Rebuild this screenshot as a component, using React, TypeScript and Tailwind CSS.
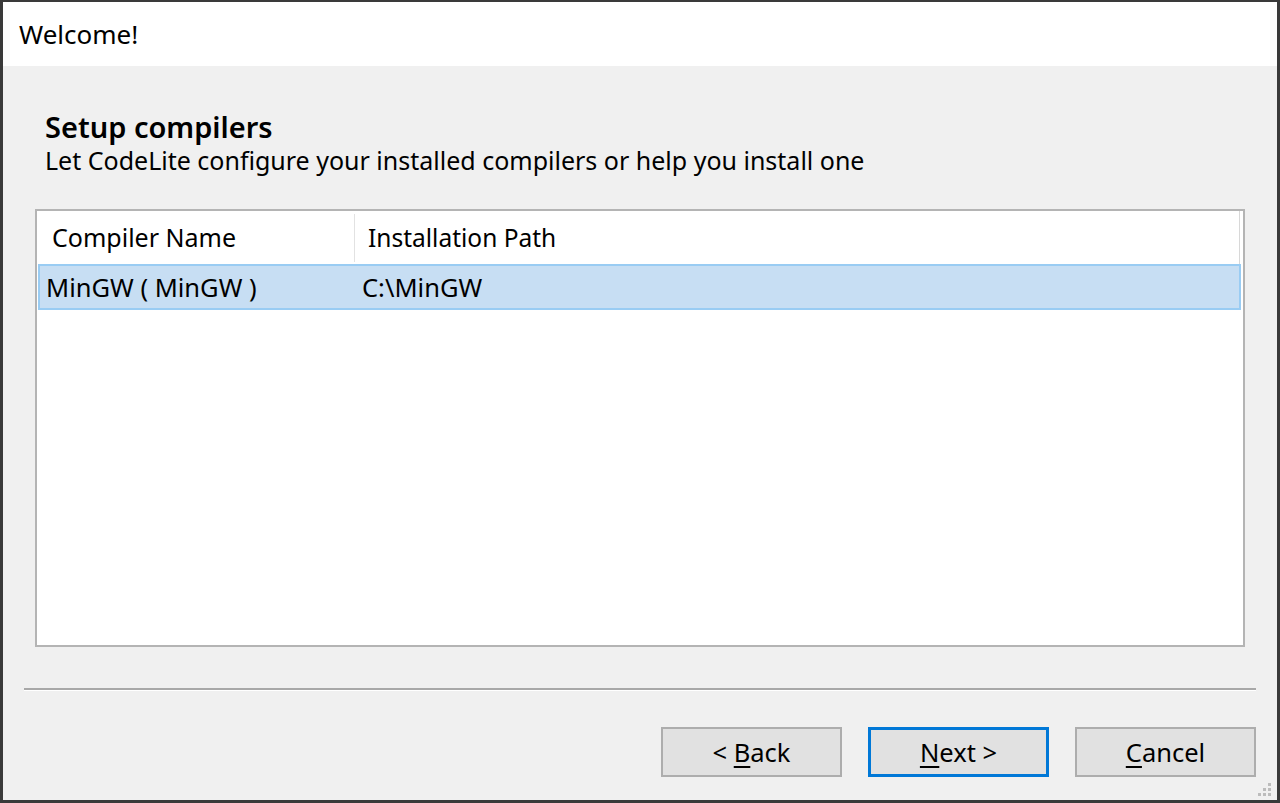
export default function App() {
  const font = { fontFamily: '"Noto Sans", "Open Sans", sans-serif' };
  return (
    <div
      className="w-[1280px] h-[803px] flex flex-col bg-[#f0f0f0] border-l-[3px] border-t-[2px] border-r-[3px] border-b-[3px] border-[#3a3a3a] overflow-hidden text-black"
      style={font}
    >
      {/* title bar */}
      <div className="h-[64px] bg-white flex items-center pl-[16px] text-[26px] leading-[32px]">Welcome!</div>

      <div className="flex-1 flex flex-col px-[21px] relative">
        {/* heading */}
        <div className="pt-[43px] pl-[21px]">
          <div className="text-[29px] font-semibold leading-[35px]">Setup compilers</div>
          <div className="text-[25px] leading-[32px]">
            Let CodeLite configure your installed compilers or help you install one
          </div>
        </div>

        {/* list */}
        <div className="mt-[33px] ml-[11px] mr-[11px] h-[438px] bg-white border-[2px] border-[#b4b4b4] flex flex-col">
          <div className="h-[53px] flex items-stretch border-r border-[#d8d8d8] mr-[3px] pt-[1px]">
            <div className="w-[318px] flex items-center pl-[15px] text-[25px] border-r border-[#e2e2e2] my-[2px]">
              Compiler Name
            </div>
            <div className="flex-1 flex items-center pl-[13px] text-[24.5px]">Installation Path</div>
          </div>
          <div className="h-[46px] mx-[1px] mr-[2px] bg-[#c7def3] border-[2px] border-[#99ccf3] flex items-center text-[25.5px]">
            <div className="w-[322px] pl-[6px]">MinGW ( MinGW )</div>
            <div>C:\MinGW</div>
          </div>
        </div>

        {/* separator */}
        <div className="mt-[41px] h-[3px] border-t-[2px] border-[#a8a8a8] bg-white"></div>

        {/* buttons */}
        <div className="flex justify-end gap-[26px] mt-[36px]">
          <button className="w-[181px] h-[50px] bg-[#e1e1e1] border-[2px] border-[#adadad] text-[25.5px] leading-[30px]">
            &lt; <span className="underline underline-offset-[4px]">B</span>ack
          </button>
          <button className="w-[181px] h-[50px] bg-[#e1e1e1] border-[3px] border-[#0078d7] text-[25.5px] leading-[30px]">
            <span className="underline underline-offset-[4px]">N</span>ext &gt;
          </button>
          <button className="w-[181px] h-[50px] bg-[#e1e1e1] border-[2px] border-[#adadad] text-[25.5px] leading-[30px]">
            <span className="underline underline-offset-[4px]">C</span>ancel
          </button>
        </div>

        {/* size grip */}
        <svg className="absolute right-[4px] bottom-[2px]" width="16" height="16" viewBox="0 0 16 16">
          <g fill="#bcbcbc">
            <rect x="11" y="1" width="3" height="3" />
            <rect x="6" y="6" width="3" height="3" />
            <rect x="11" y="6" width="3" height="3" />
            <rect x="1" y="11" width="3" height="3" />
            <rect x="6" y="11" width="3" height="3" />
            <rect x="11" y="11" width="3" height="3" />
          </g>
        </svg>
      </div>
    </div>
  );
}
